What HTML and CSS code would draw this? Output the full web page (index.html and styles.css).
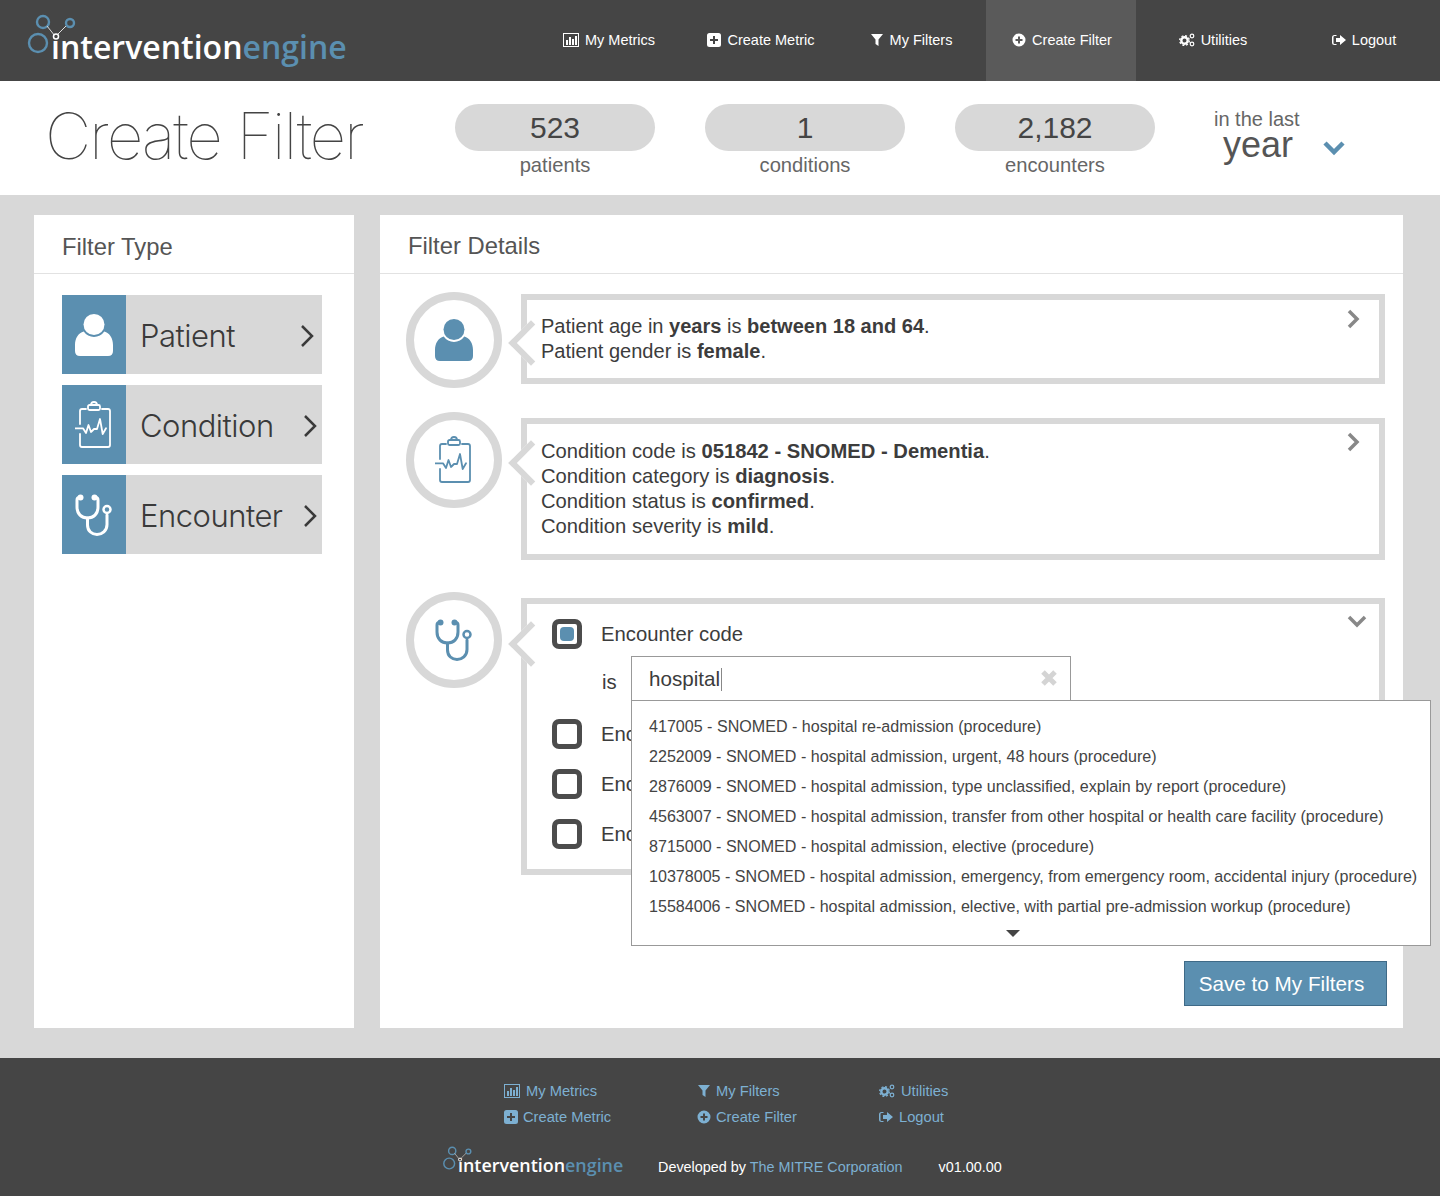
FILE: index.html
```html
<!DOCTYPE html>
<html lang="en">

<head>
    <meta charset="utf-8" />
    <title>Intervention Engine – Create Filter</title>
    <link rel="stylesheet" href="styles.css">
</head>

<body>
    <!-- shared icons -->
    <svg class="icon-defs" xmlns="http://www.w3.org/2000/svg" aria-hidden="true">
        <symbol id="i-metrics" viewBox="0 0 16 14">
            <path fill-rule="evenodd" d="M0 0h16v14H0zM1 1v12h14V1z" />
            <path d="M3 7h2v5H3zM6 4h2v8H6zM9 6h2v6H9zM12 3h2v9h-2z" />
        </symbol>
        <symbol id="i-plus-square" viewBox="0 0 14 14">
            <path fill-rule="evenodd" d="M2.5 0h9A2.5 2.5 0 0 1 14 2.500v9a2.500 2.500 0 0 1-2.500 2.500h-9A2.500 2.500 0 0 1 0 11.500v-9A2.500 2.500 0 0 1 2.500 0zM6 3v3H3v2h3v3h2V8h3V6H8V3z" />
        </symbol>
        <symbol id="i-filter" viewBox="0 0 12 14">
            <path d="M0 1h12L7.500 6.500V13L4.500 11V6.500z" />
        </symbol>
        <symbol id="i-plus-circle" viewBox="0 0 14 14">
            <path fill-rule="evenodd" d="M7 .500a6.500 6.500 0 1 1 0 13 6.500 6.500 0 0 1 0-13zM6 3.500V6H3.500v2H6v2.500h2V8h2.500V6H8V3.500z" />
        </symbol>
        <symbol id="i-cogs" viewBox="0 0 16 14">
            <circle cx="5.500" cy="7.500" r="3.200" fill="none" stroke="currentColor" stroke-width="2.400" />
            <circle cx="5.500" cy="7.500" r="4.800" fill="none" stroke="currentColor" stroke-width="1.400" stroke-dasharray="2 1.770" />
            <circle cx="13" cy="3" r="1.800" fill="none" stroke="currentColor" stroke-width="1.200" />
            <circle cx="13" cy="11" r="1.800" fill="none" stroke="currentColor" stroke-width="1.200" />
        </symbol>
        <symbol id="i-logout" viewBox="0 0 14 12">
            <path d="M4.500 1v1H2.500a1 1 0 0 0-1 1v6a1 1 0 0 0 1 1h2v1H2.500A2.500 2.500 0 0 1 0 8.500v-5A2.500 2.500 0 0 1 2.500 1z" />
            <path d="M8 1l6 5-6 5V8H4V4h4z" />
        </symbol>
        <symbol id="i-person" viewBox="0 0 38 42">
            <circle cx="19" cy="10.500" r="10.500" />
            <path d="M8.700 17.500A12.500 12.500 0 0 0 29.300 17.500C34.500 19 38 24 38 31v6q0 5-5 5H5q-5 0-5-5v-6c0-7 3.500-12 8.700-13.500z" />
        </symbol>
        <symbol id="i-clipboard" viewBox="0 0 38 48">
            <g fill="none" stroke="currentColor" stroke-width="1.800" stroke-linecap="round" stroke-linejoin="round">
                <path d="M11 8H7q-2 0-2 2v13M5 33v11q0 2 2 2h26q2 0 2-2V10q0-2-2-2h-6" />
                <rect x="13" y="4" width="12" height="5" rx="1.500" />
                <path d="M16 4q0-3 3-3t3 3" />
                <path d="M0 27.300h8l3 4.700 2.500-8 2.500 7 3-3h3l3-10 2.700 15 3.300-5.700" />
            </g>
        </symbol>
        <symbol id="i-stethoscope" viewBox="0 0 38 42">
            <g fill="none" stroke="currentColor" stroke-width="3" stroke-linecap="round">
                <path d="M6 3.500H4.500Q2 3.500 2 6v7c0 7 4.500 11 10.500 11S23 20 23 13V6q0-2.500-2.500-2.500H19" />
                <path d="M12.500 24v7c0 6 4.500 9.500 9.500 9.500s10-3.500 10-10V21" />
            </g>
            <circle cx="5.500" cy="3.500" r="3" />
            <circle cx="19.500" cy="3.500" r="3" />
            <circle cx="32" cy="15.500" r="3.500" fill="none" stroke="currentColor" stroke-width="2.500" />
        </symbol>
        <symbol id="i-logo" viewBox="0 0 60 48">
            <g fill="none" stroke="#5b8fb0">
                <circle cx="17" cy="8" r="6" stroke-width="2.400" />
                <circle cx="12" cy="29" r="9" stroke-width="2.400" />
                <circle cx="44" cy="9" r="4" stroke-width="2.400" />
            </g>
            <path d="M21 12l8 10M32 20l8-8" stroke="#ddd" stroke-width="1" />
            <circle cx="30" cy="22.500" r="2.500" fill="#454545" stroke="#fff" stroke-width="1.500" />
        </symbol>
    </svg>

    <header class="topbar">
        <a class="logo" href="#">
            <svg class="logo-mark"><use href="#i-logo" /></svg>
            <span class="logo-text">intervention<span class="logo-accent">engine</span></span>
        </a>
        <nav class="topnav">
            <a href="#" class="nudge-left"><svg class="ico ico-wide"><use href="#i-metrics" /></svg>My Metrics</a>
            <a href="#"><svg class="ico"><use href="#i-plus-square" /></svg>Create Metric</a>
            <a href="#"><svg class="ico"><use href="#i-filter" /></svg>My Filters</a>
            <a href="#" class="active"><svg class="ico"><use href="#i-plus-circle" /></svg>Create Filter</a>
            <a href="#" class="nudge-right"><svg class="ico ico-wide"><use href="#i-cogs" /></svg>Utilities</a>
            <a href="#" class="nudge-far"><svg class="ico"><use href="#i-logout" /></svg>Logout</a>
        </nav>
    </header>

    <section class="summary">
        <h1>Create Filter</h1>
        <div class="stats">
            <div class="stat"><div class="pill">523</div><div class="stat-label">patients</div></div>
            <div class="stat"><div class="pill">1</div><div class="stat-label">conditions</div></div>
            <div class="stat"><div class="pill">2,182</div><div class="stat-label">encounters</div></div>
        </div>
        <div class="period">
            <div class="period-top">in the last</div>
            <div class="period-value">
                <span>year</span>
                <svg class="period-chevron" viewBox="0 0 24 16"><polyline points="3,3 12,12 21,3" /></svg>
            </div>
        </div>
    </section>

    <main class="content">
        <aside class="panel panel-types">
            <h2>Filter Type</h2>
            <div class="type-list">
                <a class="type-row" href="#">
                    <span class="type-icon"><svg class="svg-person"><use href="#i-person" /></svg></span>
                    <span class="type-name">Patient</span>
                    <svg class="type-arrow" viewBox="0 0 14 24"><polyline points="2,2 12,12 2,22" /></svg>
                </a>
                <a class="type-row" href="#">
                    <span class="type-icon"><svg class="svg-clip"><use href="#i-clipboard" /></svg></span>
                    <span class="type-name">Condition</span>
                    <svg class="type-arrow arrow-far" viewBox="0 0 14 24"><polyline points="2,2 12,12 2,22" /></svg>
                </a>
                <a class="type-row" href="#">
                    <span class="type-icon"><svg class="svg-steth"><use href="#i-stethoscope" /></svg></span>
                    <span class="type-name">Encounter</span>
                    <svg class="type-arrow arrow-far" viewBox="0 0 14 24"><polyline points="2,2 12,12 2,22" /></svg>
                </a>
            </div>
        </aside>

        <section class="panel panel-details">
            <h2>Filter Details</h2>
            <div class="details-body">
                <div class="filter-row row-patient">
                    <div class="circle"><svg class="svg-person"><use href="#i-person" /></svg></div>
                    <div class="bubble">
                        <svg class="bubble-toggle" viewBox="0 0 14 20"><polyline points="3,2 11,10 3,18" /></svg>
                        <p>Patient age in <b>years</b> is <b>between 18 and 64</b>.</p>
                        <p>Patient gender is <b>female</b>.</p>
                    </div>
                </div>

                <div class="filter-row row-condition">
                    <div class="circle"><svg class="svg-clip"><use href="#i-clipboard" /></svg></div>
                    <div class="bubble">
                        <svg class="bubble-toggle" viewBox="0 0 14 20"><polyline points="3,2 11,10 3,18" /></svg>
                        <p>Condition code is <b>051842 - SNOMED - Dementia</b>.</p>
                        <p>Condition category is <b>diagnosis</b>.</p>
                        <p>Condition status is <b>confirmed</b>.</p>
                        <p>Condition severity is <b>mild</b>.</p>
                    </div>
                </div>

                <div class="filter-row row-encounter">
                    <div class="circle"><svg class="svg-steth"><use href="#i-stethoscope" /></svg></div>
                    <div class="bubble">
                        <svg class="bubble-toggle toggle-open" viewBox="0 0 20 14"><polyline points="2,3 10,11 18,3" /></svg>
                        <div class="check-row">
                            <span class="check checked"></span>
                            <span>Encounter code</span>
                        </div>
                        <div class="is-row">
                            <span class="is-label">is</span>
                            <div class="combo">
                                <div class="combo-input">
                                    <span class="combo-value">hospital</span>
                                    <svg class="combo-clear" viewBox="0 0 18 18"><path d="M3 3l12 12M15 3L3 15" /></svg>
                                </div>
                                <ul class="combo-list">
                                    <li>417005 - SNOMED - hospital re-admission (procedure)</li>
                                    <li>2252009 - SNOMED - hospital admission, urgent, 48 hours (procedure)</li>
                                    <li>2876009 - SNOMED - hospital admission, type unclassified, explain by report (procedure)</li>
                                    <li>4563007 - SNOMED - hospital admission, transfer from other hospital or health care facility (procedure)</li>
                                    <li>8715000 - SNOMED - hospital admission, elective (procedure)</li>
                                    <li>10378005 - SNOMED - hospital admission, emergency, from emergency room, accidental injury (procedure)</li>
                                    <li>15584006 - SNOMED - hospital admission, elective, with partial pre-admission workup (procedure)</li>
                                    <li class="combo-more"><span class="caret-down"></span></li>
                                </ul>
                            </div>
                        </div>
                        <div class="check-row spaced">
                            <span class="check"></span>
                            <span class="check-clipped">Enc</span>
                        </div>
                        <div class="check-row spaced">
                            <span class="check"></span>
                            <span class="check-clipped">Enc</span>
                        </div>
                        <div class="check-row spaced">
                            <span class="check"></span>
                            <span class="check-clipped">Enc</span>
                        </div>
                    </div>
                </div>

                <div class="actions">
                    <button class="save-btn" type="button">Save to My Filters</button>
                </div>
            </div>
        </section>
    </main>

    <footer class="footer">
        <div class="footer-links">
            <div class="footer-col col-one">
                <a href="#"><svg class="ico ico-wide"><use href="#i-metrics" /></svg>My Metrics</a>
                <a href="#" class="tight"><svg class="ico"><use href="#i-plus-square" /></svg>Create Metric</a>
            </div>
            <div class="footer-col col-two">
                <a href="#"><svg class="ico"><use href="#i-filter" /></svg>My Filters</a>
                <a href="#"><svg class="ico"><use href="#i-plus-circle" /></svg>Create Filter</a>
            </div>
            <div class="footer-col">
                <a href="#"><svg class="ico ico-wide"><use href="#i-cogs" /></svg>Utilities</a>
                <a href="#"><svg class="ico"><use href="#i-logout" /></svg>Logout</a>
            </div>
        </div>
        <div class="footer-bottom">
            <a class="logo logo-small" href="#">
                <svg class="logo-mark"><use href="#i-logo" /></svg>
                <span class="logo-text">intervention<span class="logo-accent">engine</span></span>
            </a>
            <span class="credit">Developed by <a href="#">The MITRE Corporation</a></span>
            <span class="version">v01.00.00</span>
        </div>
    </footer>
</body>

</html>
```

FILE: styles.css
```css
:root {
    --dark: #454545;
    --blue: #5b8fb0;
    --gray: #d8d8d8;
    --link: #7db0d2;
    --text: #3c3c3c;
}

* {
    box-sizing: border-box;
}

body {
    margin: 0;
    font-family: "Liberation Sans", Arial, sans-serif;
    color: var(--text);
    background: var(--gray);
}

a {
    color: inherit;
    text-decoration: none;
}

.icon-defs {
    display: none;
}

.ico {
    width: 14px;
    height: 14px;
    fill: currentColor;
    flex: none;
}

.ico-wide {
    width: 16px;
}

/* top bar */
.topbar {
    display: flex;
    height: 81px;
    background: var(--dark);
    color: #fff;
    padding-right: 4px;
}

.logo {
    position: relative;
    display: block;
    margin-left: 51px;
    padding-top: 24px;
}

.logo-mark {
    position: absolute;
    left: -25px;
    top: 14px;
    width: 60px;
    height: 48px;
}

.logo-text {
    font-family: "Open Sans", sans-serif;
    font-weight: 600;
    font-size: 32px;
    line-height: 46px;
    color: #fff;
}

.logo-accent {
    color: var(--blue);
}

.topnav {
    display: flex;
    margin-left: auto;
}

.topnav a {
    display: flex;
    align-items: center;
    justify-content: center;
    gap: 6px;
    width: 150px;
    font-size: 14.500px;
    padding-bottom: 1px;
}

.topnav a.active {
    background: #5a5a5a;
    padding-left: 2px;
}

.topnav a.nudge-left {
    padding-right: 4px;
}

.topnav a.nudge-right {
    padding-left: 4px;
}

.topnav a.nudge-far {
    padding-left: 6px;
}

/* page title and counters */
.summary {
    display: flex;
    height: 114px;
    background: #fff;
    padding-left: 45px;
}

.summary h1 {
    width: 410px;
    margin: 16px 0 0;
    font-family: Inter, sans-serif;
    font-weight: 100;
    font-size: 64px;
    line-height: 78px;
    letter-spacing: -2.150px;
    color: #444;
    white-space: nowrap;
}

.stats {
    display: flex;
    gap: 50px;
    padding-top: 23px;
}

.stat {
    width: 200px;
    text-align: center;
}

.pill {
    height: 47px;
    border-radius: 24px;
    background: var(--gray);
    font-size: 30px;
    line-height: 47px;
    color: var(--dark);
}

.stat-label {
    margin-top: 2px;
    font-size: 20.200px;
    line-height: 24px;
    color: #666;
}

.period {
    margin-left: 59px;
    padding-top: 27px;
    color: #666;
}

.period-top {
    font-size: 20px;
    line-height: 23px;
}

.period-value {
    display: flex;
    align-items: center;
    padding-left: 9px;
    font-size: 36px;
    line-height: 28px;
    color: #555;
}

.period-chevron {
    width: 24px;
    height: 16px;
    margin: 6px 0 0 29px;
    fill: none;
    stroke: var(--blue);
    stroke-width: 4.500;
}

/* main panels */
.content {
    display: flex;
    gap: 26px;
    height: 863px;
    padding: 20px 37px 30px 34px;
}

.panel {
    background: #fff;
}

.panel h2 {
    height: 59px;
    margin: 0;
    padding: 18px 28px 0;
    border-bottom: 1px solid #e2e2e2;
    font-weight: 400;
    font-size: 23.800px;
    line-height: 28px;
    color: #555;
}

.panel-types {
    width: 320px;
}

.panel-details {
    flex: 1;
}

.panel-details h2 {
    padding-top: 17px;
}

.type-list {
    display: flex;
    flex-direction: column;
    gap: 11px;
    padding: 21px 32px 0 28px;
}

.type-row {
    display: flex;
    align-items: center;
    height: 79px;
    background: var(--gray);
}

.type-icon {
    display: flex;
    align-items: center;
    justify-content: center;
    width: 64px;
    height: 100%;
    margin-right: 14px;
    background: var(--blue);
    color: #fff;
    fill: #fff;
}

.type-name {
    flex: 1;
    margin-top: 1px;
    font-family: Inter, sans-serif;
    font-weight: 300;
    font-size: 31px;
    color: #3a3a3a;
    letter-spacing: -0.500px;
}

.type-arrow {
    width: 14px;
    height: 24px;
    margin: 3px 8px 0 0;
    fill: none;
    stroke: #3a3a3a;
    stroke-width: 2.500;
}

.arrow-far {
    margin-right: 5px;
}

.svg-person {
    width: 38px;
    height: 42px;
}

.svg-clip {
    width: 38px;
    height: 48px;
}

.svg-steth {
    width: 38px;
    height: 42px;
}

/* filter rows */
.details-body {
    padding: 18px 16px 0 26px;
}

.filter-row {
    display: flex;
    align-items: flex-start;
    gap: 19px;
}

.row-condition {
    margin-top: 24px;
}

.row-encounter {
    margin-top: 32px;
}

.circle {
    display: flex;
    align-items: center;
    justify-content: center;
    flex: none;
    width: 96px;
    height: 96px;
    border: 8px solid var(--gray);
    border-radius: 50%;
    color: var(--blue);
    fill: var(--blue);
}

.bubble {
    position: relative;
    flex: 1;
    margin-right: 2px;
    border: 6px solid var(--gray);
    background: #fff;
    font-size: 20.050px;
    line-height: 25px;
}

/* notch pointing at the circle */
.bubble::before {
    content: "";
    position: absolute;
    left: -12px;
    width: 26px;
    height: 26px;
    background: #fff;
    border-left: 6px solid var(--gray);
    border-bottom: 6px solid var(--gray);
    transform: rotate(45deg);
}

.bubble p {
    position: relative;
    margin: 0;
}

.row-patient .bubble {
    margin-top: 2px;
    height: 90px;
    padding: 14px 14px 0;
}

.row-patient .bubble::before {
    top: 27px;
}

.row-condition .bubble {
    margin-top: 6px;
    height: 142px;
    padding: 15px 14px 0;
    font-size: 20.200px;
}

.row-condition .bubble::before {
    top: 23px;
}

.row-encounter .bubble {
    margin-top: 6px;
    height: 277px;
    padding: 15px 25px 0;
    font-size: 20.300px;
}

.row-encounter .bubble::before {
    top: 24px;
}

.bubble-toggle {
    position: absolute;
    top: 9px;
    right: 19px;
    width: 14px;
    height: 20px;
    fill: none;
    stroke: #888;
    stroke-width: 3.500;
}

.row-condition .bubble-toggle {
    top: 8px;
}

.toggle-open,
.row-encounter .bubble-toggle {
    top: 10px;
    right: 12px;
    width: 20px;
    height: 14px;
}

.check-row {
    position: relative;
    display: flex;
    align-items: center;
    gap: 19px;
    height: 30px;
}

.check-row.spaced {
    margin-bottom: 20px;
}

.check {
    flex: none;
    width: 30px;
    height: 30px;
    padding: 3px;
    border: 5px solid #4c4c4c;
    border-radius: 7px;
}

.check.checked::after {
    content: "";
    display: block;
    width: 100%;
    height: 100%;
    border-radius: 4px;
    background: var(--blue);
}

/* label cut off where the open list starts */
.check-clipped {
    width: 30px;
    overflow: hidden;
    white-space: nowrap;
}

.is-row {
    display: flex;
    align-items: flex-start;
    height: 63px;
    margin-top: 7px;
    padding-left: 50px;
}

.is-label {
    width: 29px;
    padding-top: 14px;
}

.combo {
    position: relative;
    z-index: 2;
    width: 440px;
}

.combo-input {
    display: flex;
    align-items: center;
    height: 45px;
    padding: 0 12px 1px 17px;
    border: 1px solid #999;
    background: #fff;
    font-size: 20.600px;
}

.combo-value {
    flex: 1;
}

/* text caret after the typed value */
.combo-value::after {
    content: "";
    display: inline-block;
    width: 1px;
    height: 23px;
    margin-left: 1px;
    vertical-align: -5px;
    background: #888;
}

.combo-clear {
    width: 18px;
    height: 18px;
    fill: none;
    stroke: #d4d4d4;
    stroke-width: 5;
}

.combo-list {
    position: absolute;
    top: 44px;
    left: 0;
    width: 800px;
    height: 246px;
    margin: 0;
    padding: 10px 0 0 17px;
    list-style: none;
    border: 1px solid #999;
    background: #fff;
    font-size: 16.080px;
    line-height: 30px;
    color: #444;
    white-space: nowrap;
}

.combo-more {
    display: flex;
    justify-content: center;
    height: 24px;
    margin-left: -17px;
    padding: 9px 36px 0 0;
}

.caret-down {
    width: 0;
    height: 0;
    border: 7px solid transparent;
    border-top-color: #444;
    border-bottom: 0;
}

.actions {
    display: flex;
    justify-content: flex-end;
    margin-top: 86px;
}

.save-btn {
    width: 203px;
    height: 45px;
    padding: 0 8px 0 0;
    border: 1px solid #3f6a87;
    background: var(--blue);
    color: #fff;
    font-family: inherit;
    font-size: 20.700px;
    text-align: center;
}

/* footer */
.footer {
    height: 138px;
    background: var(--dark);
    color: #fff;
    font-size: 14.700px;
}

.footer-links {
    display: flex;
    padding: 24px 0 0 504px;
}

.footer-col {
    display: flex;
    flex-direction: column;
    gap: 8px;
    width: 182px;
}

.col-one {
    width: 193px;
}

.footer-col a {
    display: flex;
    align-items: center;
    gap: 6px;
    height: 18px;
    color: var(--link);
}

.footer-col a.tight,
.col-two a {
    gap: 5px;
}

.footer-bottom {
    display: flex;
    align-items: center;
    margin-top: 30px;
    padding-left: 458px;
    font-size: 14.400px;
}

.logo-small {
    width: 200px;
    margin: -4px 0 0;
    padding-top: 0;
}

.logo-small .logo-mark {
    left: -16.500px;
    top: -6.500px;
    width: 36px;
    height: 29px;
}

.logo-small .logo-text {
    display: block;
    font-size: 17.900px;
    line-height: 26px;
}

.credit a {
    color: var(--link);
}

.version {
    margin-left: 36px;
}
```
